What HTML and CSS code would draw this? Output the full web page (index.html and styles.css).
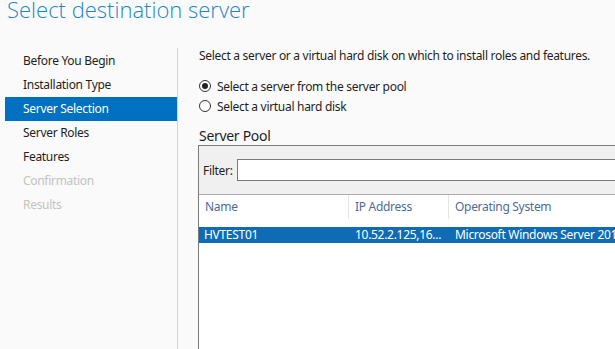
FILE: index.html
```html
<!DOCTYPE html>
<html>
    <head>
        <meta charset="UTF-8">
        <link rel="stylesheet" href="styles.css">
    </head>
    <body>

        <h1 class="title">Select destination server</h1>

        <div class="wizard">
            <div class="steps">
                <div class="step">Before You Begin</div>
                <div class="step">Installation Type</div>
                <div class="step active">Server Selection</div>
                <div class="step">Server Roles</div>
                <div class="step">Features</div>
                <div class="step disabled">Confirmation</div>
                <div class="step disabled">Results</div>
            </div>

            <div class="content">
                <p class="intro">Select a server or a virtual hard disk on which to install roles and features.</p>

                <label class="radio"><span class="dot checked"></span>Select a server from the server pool</label>
                <label class="radio"><span class="dot"></span>Select a virtual hard disk</label>

                <h2 class="pool-title">Server Pool</h2>

                <div class="pool">
                    <div class="filter">
                        <span>Filter:</span>
                        <div class="filter-box"></div>
                    </div>
                    <div class="list">
                        <div class="row head">
                            <div class="col c-name">Name</div>
                            <div class="col c-ip">IP Address</div>
                            <div class="col c-os">Operating System</div>
                        </div>
                        <div class="row selected">
                            <div class="col c-name">HVTEST01</div>
                            <div class="col c-ip">10.52.2.125,16...</div>
                            <div class="col c-os">Microsoft Windows Server 2012 R2</div>
                        </div>
                    </div>
                </div>
            </div>
        </div>

    </body>
</html>
```

FILE: styles.css
```css
body {
    margin: 0;
    background-color: #fafafa;
    font-family: "Noto Sans", sans-serif;
    font-size: 12px;
    letter-spacing: -0.3px;
    color: #1e1e1e;
    overflow: hidden;
    height: 349px;
}

.title {
    margin: -6px 0 0 7px;
    height: 54px;
    font-family: "Open Sans", sans-serif;
    font-weight: 300;
    font-size: 22px;
    letter-spacing: 0;
    color: #1b87c2;
}

/* left side list of wizard pages */
.wizard {
    display: flex;
    height: 301px;
}

.steps {
    width: 172px;
    flex: none;
    padding-left: 5px;
    padding-top: 1px;
    border-right: 1px solid #d4d4d4;
}

.step {
    height: 24px;
    line-height: 24px;
    padding-left: 18px;
}

.step.active {
    background-color: #0070c0;
    color: #fff;
}

.step.disabled {
    color: #c3c3c3;
}

/* right side */
.content {
    padding-left: 21px;
    width: 439px;
    flex: none;
}

.intro {
    margin: 0;
    line-height: 16px;
}

.radio {
    display: flex;
    align-items: center;
    height: 20px;
}

.radio:first-of-type {
    margin-top: 12px;
}

.dot {
    width: 12px;
    height: 12px;
    border: 1px solid #333;
    border-radius: 50%;
    margin-right: 6px;
    box-sizing: border-box;
    position: relative;
    background: #fff;
}

.dot.checked::after {
    content: "";
    position: absolute;
    left: 2px;
    top: 2px;
    width: 6px;
    height: 6px;
    border-radius: 50%;
    background: #222;
}

.pool-title {
    margin: 11px 0 0;
    font-weight: normal;
    font-size: 14px;
    line-height: 18px;
}

.pool {
    margin-left: -1px;
    width: 440px;
    height: 203px;
    border: 1px solid #7a7a7a;
    border-right: none;
    border-bottom: none;
}

.filter {
    display: flex;
    align-items: center;
    height: 48px;
    background-color: #f0f0f0;
    border-bottom: 1px solid #acacac;
    padding-left: 4px;
}

.filter span {
    margin-right: 4px;
}

.filter-box {
    flex: 1;
    height: 20px;
    border: 1px solid #7a7a7a;
    background: #fff;
}

.list {
    background: #fff;
    height: 154px;
}

.row {
    display: flex;
    white-space: nowrap;
}

.row.head {
    height: 24px;
    line-height: 24px;
    color: #4e6b9a;
    margin-bottom: 8px;
}

.row.head .col {
    border-right: 1px solid #e5e5e5;
}

.row.selected {
    background-color: #0f6cb4;
    color: #fff;
    height: 16px;
    line-height: 16px;
}

.col {
    overflow: hidden;
    box-sizing: border-box;
}

.c-name {
    width: 150px;
    padding-left: 6px;
}

.row.selected .c-name {
    padding-left: 5px;
}

.c-ip {
    width: 100px;
    padding-left: 6px;
}

.c-os {
    flex: 1;
    padding-left: 6px;
}
```
